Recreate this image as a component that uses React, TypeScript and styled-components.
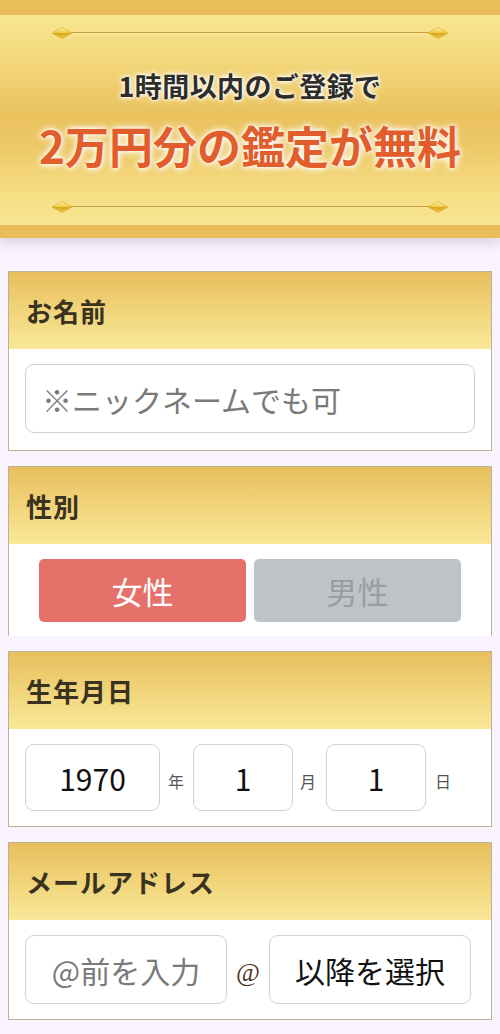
import React from "react";
import styled, { createGlobalStyle } from "styled-components";

const GlobalStyle = createGlobalStyle`
  html, body { margin: 0; padding: 0; }
  body {
    background: #f9f4fd;
    font-family: "Noto Sans CJK JP", "Noto Sans", sans-serif;
    width: 500px;
    overflow-x: hidden;
  }
  * { box-sizing: border-box; }
`;

const Page = styled.div`
  width: 500px;
  padding-bottom: 11px;
`;

const Banner = styled.header`
  background: #e9bd5a;
  padding: 15px 0 13px;
  box-shadow: 0 6px 10px rgba(90, 70, 110, 0.18);
`;

const Panel = styled.div`
  height: 210px;
  display: flex;
  flex-direction: column;
  align-items: center;
  padding-top: 12px;
  background: linear-gradient(
    180deg,
    #f8e690 0%,
    #f3d77a 22%,
    #eac25e 48%,
    #edc866 62%,
    #f6de84 85%,
    #f8e692 100%
  );
`;

const OrnamentSvg = styled.svg<{ $gap: number }>`
  display: block;
  width: 500px;
  height: 12px;
  margin-top: ${(p) => p.$gap}px;
`;

const Lead = styled.div`
  margin-top: 32px;
  font-size: 27px;
  line-height: 30px;
  font-weight: 700;
  color: #2e2d2b;
  letter-spacing: 0.4px;
  text-shadow: 0 0 3px #fff, 0 0 5px #fff, 0 0 7px rgba(255, 255, 255, 0.8);
`;

const Headline = styled.div`
  margin-top: 19px;
  font-size: 44px;
  line-height: 50px;
  font-weight: 700;
  color: #e15d2b;
  text-shadow: 0 0 3px #fff, 0 0 6px #fff, 0 0 9px rgba(255, 255, 255, 0.8);
`;

const Form = styled.main`
  display: flex;
  flex-direction: column;
  gap: 15px;
  padding: 33px 8px 0;
`;

const Card = styled.section<{ $open?: boolean }>`
  background: #fff;
  border: 1px solid #bfb196;
  border-bottom-color: ${(p) => (p.$open ? "transparent" : "#bfb196")};
`;

const CardHeader = styled.div`
  height: 77px;
  display: flex;
  align-items: center;
  padding-left: 17px;
  background: linear-gradient(180deg, #e8bf5d 0%, #f1d47a 50%, #f9e899 100%);
  font-size: 26px;
  font-weight: 700;
  color: #38321f;
  letter-spacing: 1px;
`;

const CardBody = styled.div<{ $pt: number; $pb: number; $px: number }>`
  padding: ${(p) => p.$pt}px ${(p) => p.$px}px ${(p) => p.$pb}px;
`;

const TextInput = styled.input`
  display: block;
  width: 100%;
  height: 69px;
  border: 1px solid #cfcfcf;
  border-radius: 9px;
  padding: 0 16px;
  font-family: "Noto Sans CJK JP", "Noto Sans", sans-serif;
  font-size: 30px;
  color: #111;
  background: #fff;
  outline: none;
  &::placeholder { color: #7a7a7a; }
`;

const GenderRow = styled.div`
  display: grid;
  grid-template-columns: 1fr 1fr;
  gap: 8px;
  padding: 0 21px;
`;

const GenderButton = styled.button<{ $active?: boolean }>`
  height: 63px;
  border: none;
  border-radius: 5px;
  background: ${(p) => (p.$active ? "#e6706a" : "#bec3c7")};
  color: ${(p) => (p.$active ? "#fff" : "#9a9ea2")};
  font-family: "Noto Sans CJK JP", "Noto Sans", sans-serif;
  font-size: 31px;
  font-weight: 400;
  line-height: 1;
  padding: 0;
`;

const DateRow = styled.div`
  display: flex;
  align-items: center;
`;

const DateBox = styled.input<{ $w: number }>`
  width: ${(p) => p.$w}px;
  height: 67px;
  border: 1px solid #d2d2d2;
  border-radius: 9px;
  text-align: center;
  font-family: "Noto Sans CJK JP", "Noto Sans", sans-serif;
  font-size: 30px;
  color: #111;
  background: #fff;
  outline: none;
  padding: 0;
`;

const Unit = styled.span<{ $ml: number; $mr: number }>`
  margin: 6px ${(p) => p.$mr}px 0 ${(p) => p.$ml}px;
  font-size: 16px;
  color: #555;
  line-height: 1;
`;

const MailRow = styled.div`
  display: grid;
  grid-template-columns: 202px 1fr 202px;
  align-items: center;
  width: 446px;
`;

const MailInput = styled.input`
  width: 202px;
  height: 69px;
  border: 1px solid #d2d2d2;
  border-radius: 9px;
  text-align: center;
  font-family: "Noto Sans CJK JP", "Noto Sans", sans-serif;
  font-size: 30px;
  color: #111;
  background: #fff;
  outline: none;
  padding: 0;
  &::placeholder { color: #7a7a7a; }
`;

const AtMark = styled.span`
  text-align: center;
  font-family: "Liberation Serif", "DejaVu Serif", serif;
  font-size: 26px;
  color: #4a3328;
  padding-top: 6px;
`;

const DomainSelect = styled.button`
  width: 202px;
  height: 69px;
  border: 1px solid #d2d2d2;
  border-radius: 9px;
  background: #fff;
  font-family: "Noto Sans CJK JP", "Noto Sans", sans-serif;
  font-size: 30px;
  color: #111;
  padding: 0;
`;

const Ornament: React.FC<{ gap: number }> = ({ gap }) => (
  <OrnamentSvg $gap={gap} viewBox="0 0 500 12">
    <defs>
      <linearGradient id="dia" x1="0" y1="0" x2="0" y2="1">
        <stop offset="0" stopColor="#fff3a8" />
        <stop offset="0.45" stopColor="#f2cf48" />
        <stop offset="0.55" stopColor="#d9a820" />
        <stop offset="1" stopColor="#f0c840" />
      </linearGradient>
    </defs>
    <line x1="66" y1="5.5" x2="434" y2="5.5" stroke="#c99f3e" strokeWidth="1.2" />
    <line x1="66" y1="7" x2="434" y2="7" stroke="#fbeeaa" strokeWidth="1" />
    <polygon points="52,6 62,0.5 72,6 62,11.5" fill="url(#dia)" stroke="#d8a830" strokeWidth="0.6" />
    <polygon points="428,6 438,0.5 448,6 438,11.5" fill="url(#dia)" stroke="#d8a830" strokeWidth="0.6" />
  </OrnamentSvg>
);

export default function App() {
  return (
    <Page>
      <GlobalStyle />
      <Banner>
        <Panel>
          <Ornament gap={0} />
          <Lead>1時間以内のご登録で</Lead>
          <Headline>2万円分の鑑定が無料</Headline>
          <Ornament gap={31} />
        </Panel>
      </Banner>

      <Form>
        <Card>
          <CardHeader>お名前</CardHeader>
          <CardBody $pt={15} $pb={17} $px={16}>
            <TextInput placeholder="※ニックネームでも可" />
          </CardBody>
        </Card>

        <Card $open>
          <CardHeader>性別</CardHeader>
          <CardBody $pt={15} $pb={13} $px={9}>
            <GenderRow>
              <GenderButton $active>女性</GenderButton>
              <GenderButton>男性</GenderButton>
            </GenderRow>
          </CardBody>
        </Card>

        <Card>
          <CardHeader>生年月日</CardHeader>
          <CardBody $pt={15} $pb={15} $px={16}>
            <DateRow>
              <DateBox $w={135} defaultValue="1970" readOnly />
              <Unit $ml={8} $mr={9}>年</Unit>
              <DateBox $w={100} defaultValue="1" readOnly />
              <Unit $ml={7} $mr={10}>月</Unit>
              <DateBox $w={100} defaultValue="1" readOnly />
              <Unit $ml={9} $mr={0}>日</Unit>
            </DateRow>
          </CardBody>
        </Card>

        <Card>
          <CardHeader>メールアドレス</CardHeader>
          <CardBody $pt={15} $pb={15} $px={16}>
            <MailRow>
              <MailInput placeholder="@前を入力" />
              <AtMark>@</AtMark>
              <DomainSelect>以降を選択</DomainSelect>
            </MailRow>
          </CardBody>
        </Card>
      </Form>
    </Page>
  );
}
